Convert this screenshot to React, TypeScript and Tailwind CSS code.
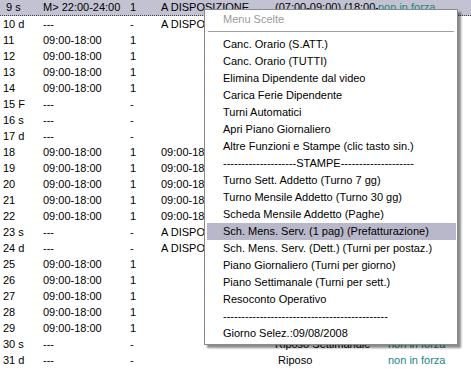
import React from "react";

type Row = { c1: string; c2: string; c3: string; c4: string; c5?: string; c6?: string; c6pad?: boolean; sel?: boolean };

const rows: Row[] = [
  { c1: "\u00a09 s", c2: "M> 22:00-24:00", c3: "1", c4: "A DISPOSIZIONE", c5: "(07:00-09:00) (18:00-24:00)", c6: "non in forza", sel: true },
  { c1: "10 d", c2: "---", c3: "-", c4: "A DISPOSIZIONE" },
  { c1: "11", c2: "09:00-18:00", c3: "1", c4: "" },
  { c1: "12", c2: "09:00-18:00", c3: "1", c4: "" },
  { c1: "13", c2: "09:00-18:00", c3: "1", c4: "" },
  { c1: "14", c2: "09:00-18:00", c3: "1", c4: "" },
  { c1: "15 F", c2: "---", c3: "-", c4: "" },
  { c1: "16 s", c2: "---", c3: "-", c4: "" },
  { c1: "17 d", c2: "---", c3: "-", c4: "" },
  { c1: "18", c2: "09:00-18:00", c3: "1", c4: "09:00-18:00" },
  { c1: "19", c2: "09:00-18:00", c3: "1", c4: "09:00-18:00" },
  { c1: "20", c2: "09:00-18:00", c3: "1", c4: "09:00-18:00" },
  { c1: "21", c2: "09:00-18:00", c3: "1", c4: "09:00-18:00" },
  { c1: "22", c2: "09:00-18:00", c3: "1", c4: "09:00-18:00" },
  { c1: "23 s", c2: "---", c3: "-", c4: "A DISPOSIZIONE" },
  { c1: "24 d", c2: "---", c3: "-", c4: "A DISPOSIZIONE" },
  { c1: "25", c2: "09:00-18:00", c3: "1", c4: "" },
  { c1: "26", c2: "09:00-18:00", c3: "1", c4: "" },
  { c1: "27", c2: "09:00-18:00", c3: "1", c4: "" },
  { c1: "28", c2: "09:00-18:00", c3: "1", c4: "" },
  { c1: "29", c2: "09:00-18:00", c3: "1", c4: "" },
  { c1: "30 s", c2: "---", c3: "-", c4: "", c5: "Riposo Settimanale", c6: "non in forza", c6pad: true },
  { c1: "31 d", c2: "---", c3: "-", c4: "", c5: "\u00a0Riposo", c6: "non in forza", c6pad: true },
];

const items = [
  "Canc. Orario (S.ATT.)",
  "Canc. Orario (TUTTI)",
  "Elimina Dipendente dal video",
  "Carica Ferie Dipendente",
  "Turni Automatici",
  "Apri Piano Giornaliero",
  "Altre Funzioni e Stampe (clic tasto sin.)",
  "--------------------STAMPE--------------------",
  "Turno Sett. Addetto (Turno 7 gg)",
  "Turno Mensile Addetto (Turno 30 gg)",
  "Scheda Mensile Addetto (Paghe)",
  "Sch. Mens. Serv. (1 pag) (Prefatturazione)",
  "Sch. Mens. Serv. (Dett.) (Turni per postaz.)",
  "Piano Giornaliero (Turni per giorno)",
  "Piano Settimanale (Turni per sett.)",
  "Resoconto Operativo",
  "---------------------------------------------",
  "Giorno Selez.:09/08/2008",
];

export default function App() {
  return (
    <div className="relative w-[471px] h-[369px] overflow-hidden bg-white text-black" style={{ fontFamily: '"Liberation Sans", Arial, sans-serif' }}>
      <div className="flex flex-col text-[11px]">
        {rows.map((r, i) => (
          <div
            key={i}
            className={
              "flex h-[16px] items-center whitespace-nowrap " +
              (r.sel ? "bg-[#c2c2d2] border-b border-dotted border-[#404040]" : "")
            }
          >
            <div className="w-[43px] pl-[3px] overflow-hidden">{r.c1}</div>
            <div className="w-[87px] overflow-hidden">{r.c2}</div>
            <div className="w-[31px] overflow-hidden">{r.c3}</div>
            <div className="w-[114px] overflow-hidden">{r.c4}</div>
            <div className="w-[103px] overflow-hidden">{r.c5 ?? ""}</div>
            <div className={"flex-1 overflow-hidden text-[#1a8585] " + (r.c6pad ? "pl-[10px]" : "")}>{r.c6 ?? ""}</div>
          </div>
        ))}
      </div>

      <div className="absolute left-[204px] top-[9px] w-[254px] h-[336px] bg-white border border-[#8a8a8a] shadow-[3px_3px_2px_rgba(0,0,0,0.45)] text-[11px] whitespace-nowrap">
        <div className="h-[18px] flex items-center pl-[18px] text-[#9a9a9a]">Menu Scelte</div>
        <div className="mx-[3px] mt-[3px] mb-[4px] h-px bg-[#a0a0a0]" />
        {items.map((t, i) => (
          <div
            key={i}
            className={"h-[17px] flex items-center ml-[2px] mr-[1px] pl-[16px] " + (i === 11 ? "bg-[#b8b8ca]" : "")}
          >
            {t}
          </div>
        ))}
      </div>
    </div>
  );
}
